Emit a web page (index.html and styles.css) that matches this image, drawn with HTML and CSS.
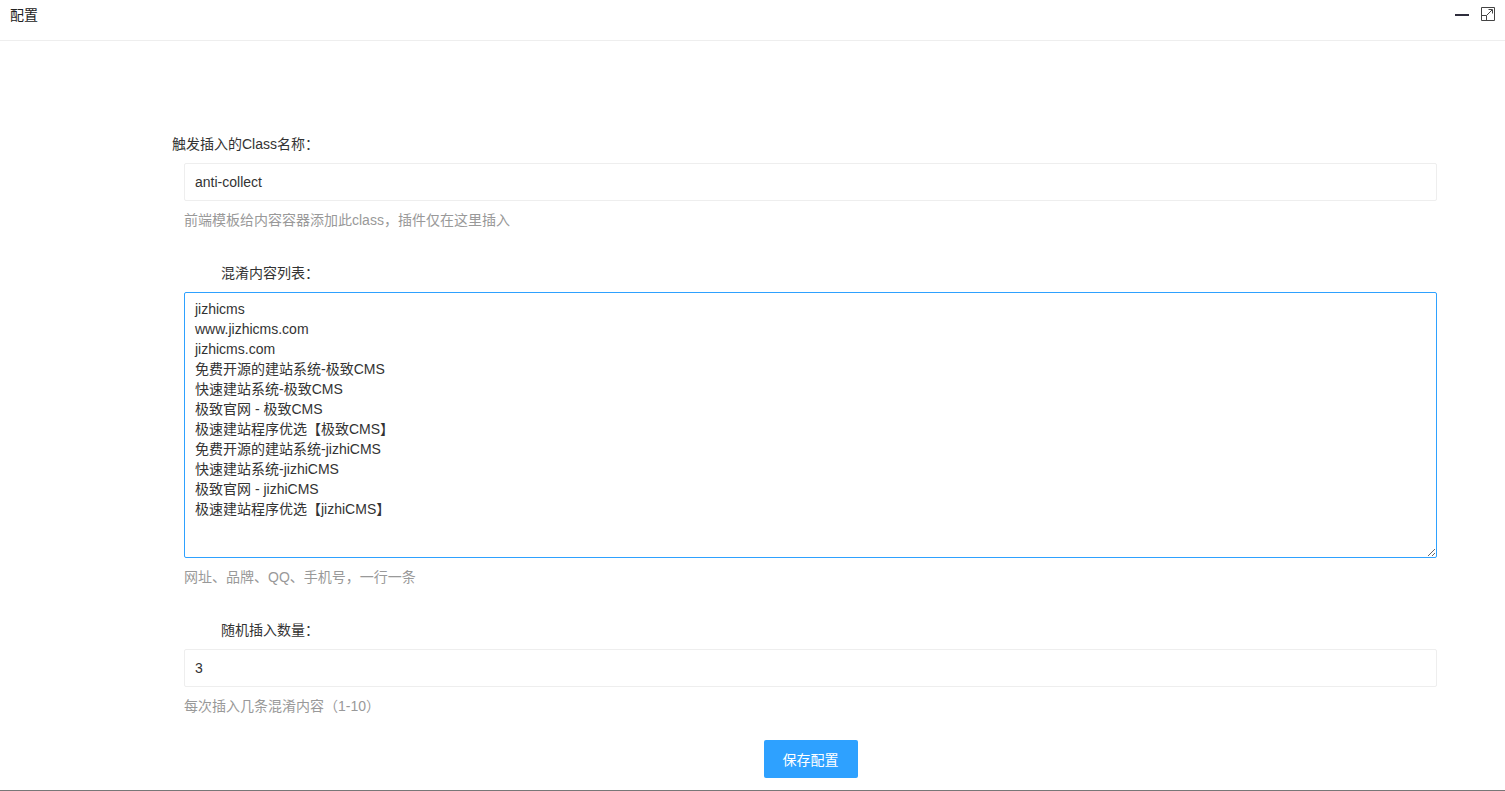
FILE: index.html
```html
<!DOCTYPE html>
<html lang="zh-CN">
<head>
  <meta charset="UTF-8" />
  <title>配置</title>
  <link rel="stylesheet" href="styles.css">
</head>
<body>
  <div class="layer">
    <div class="layer-title">
      <span>配置</span>
      <div class="layer-tools">
        <svg class="icon-min" width="14" height="2" viewBox="0 0 14 2"><rect width="14" height="2" fill="#2e2d3c"/></svg>
        <svg class="icon-max" width="14" height="14" viewBox="0 0 14 14" fill="none" stroke="#444" stroke-width="1">
          <path d="M.5 .5H13.5V13.5H.5Z"/>
          <path d="M.5 8.5H5.5V13.5"/>
          <path d="M5.5 8.5L11 3M7.5 2.5H11.5V6.5"/>
        </svg>
      </div>
    </div>

    <form class="config-form">
      <div class="form-item">
        <label class="form-label">触发插入的Class名称：</label>
        <input class="form-input" type="text" value="anti-collect" />
        <div class="form-help">前端模板给内容容器添加此class，插件仅在这里插入</div>
      </div>

      <div class="form-item">
        <label class="form-label">混淆内容列表：</label>
        <textarea class="form-input form-textarea">jizhicms
www.jizhicms.com
jizhicms.com
免费开源的建站系统-极致CMS
快速建站系统-极致CMS
极致官网 - 极致CMS
极速建站程序优选【极致CMS】
免费开源的建站系统-jizhiCMS
快速建站系统-jizhiCMS
极致官网 - jizhiCMS
极速建站程序优选【jizhiCMS】</textarea>
        <div class="form-help">网址、品牌、QQ、手机号，一行一条</div>
      </div>

      <div class="form-item">
        <label class="form-label">随机插入数量：</label>
        <input class="form-input" type="text" value="3" />
        <div class="form-help">每次插入几条混淆内容（1-10）</div>
      </div>

      <div class="form-actions">
        <button class="btn" type="button">保存配置</button>
      </div>
    </form>
  </div>
</body>
</html>
```

FILE: styles.css
```css
* {
  box-sizing: border-box;
  font-family: "Liberation Sans", "Noto Sans CJK SC", sans-serif;
}

html, body {
  height: 100%;
}

body {
  margin: 0;
  background: #fff;
  color: #333;
  font-size: 14px;
  overflow: hidden;
}

.layer {
  height: 791px;
  border-bottom: 1px solid #777;
}

.layer-title {
  display: flex;
  justify-content: space-between;
  height: 41px;
  padding: 5px 10px 0;
  line-height: 20px;
  font-size: 14px;
  color: #222;
  border-bottom: 1px solid #eee;
}

.layer-tools {
  display: flex;
  align-items: flex-start;
  gap: 12px;
}

.icon-min {
  margin-top: 9px;
}

.icon-max {
  margin-top: 2px;
}

.config-form {
  padding: 93px 68px 0 184px;
}

.form-item {
  margin-bottom: 33px;
}

.form-label {
  display: block;
  width: 147px;
  margin-left: -12px;
  margin-bottom: 9px;
  line-height: 20px;
  text-align: right;
  white-space: nowrap;
  color: #333;
}

.form-input {
  display: block;
  width: 100%;
  height: 38px;
  padding: 0 10px;
  border: 1px solid #eee;
  border-radius: 2px;
  background: #fff;
  color: #333;
  font-size: 14px;
  outline: none;
}

.form-textarea {
  height: 266px;
  padding: 6px 10px;
  line-height: 20px;
  border-color: #2ea1ff;
  resize: vertical;
}

.form-help {
  margin-top: 9px;
  line-height: 20px;
  color: #999;
}

.form-item:nth-child(3) {
  margin-bottom: 24px;
}

.form-actions {
  display: flex;
  justify-content: center;
}

.btn {
  width: 94px;
  height: 38px;
  border: none;
  border-radius: 2px;
  background: #2ea1ff;
  color: #fff;
  font-size: 14px;
}
```
